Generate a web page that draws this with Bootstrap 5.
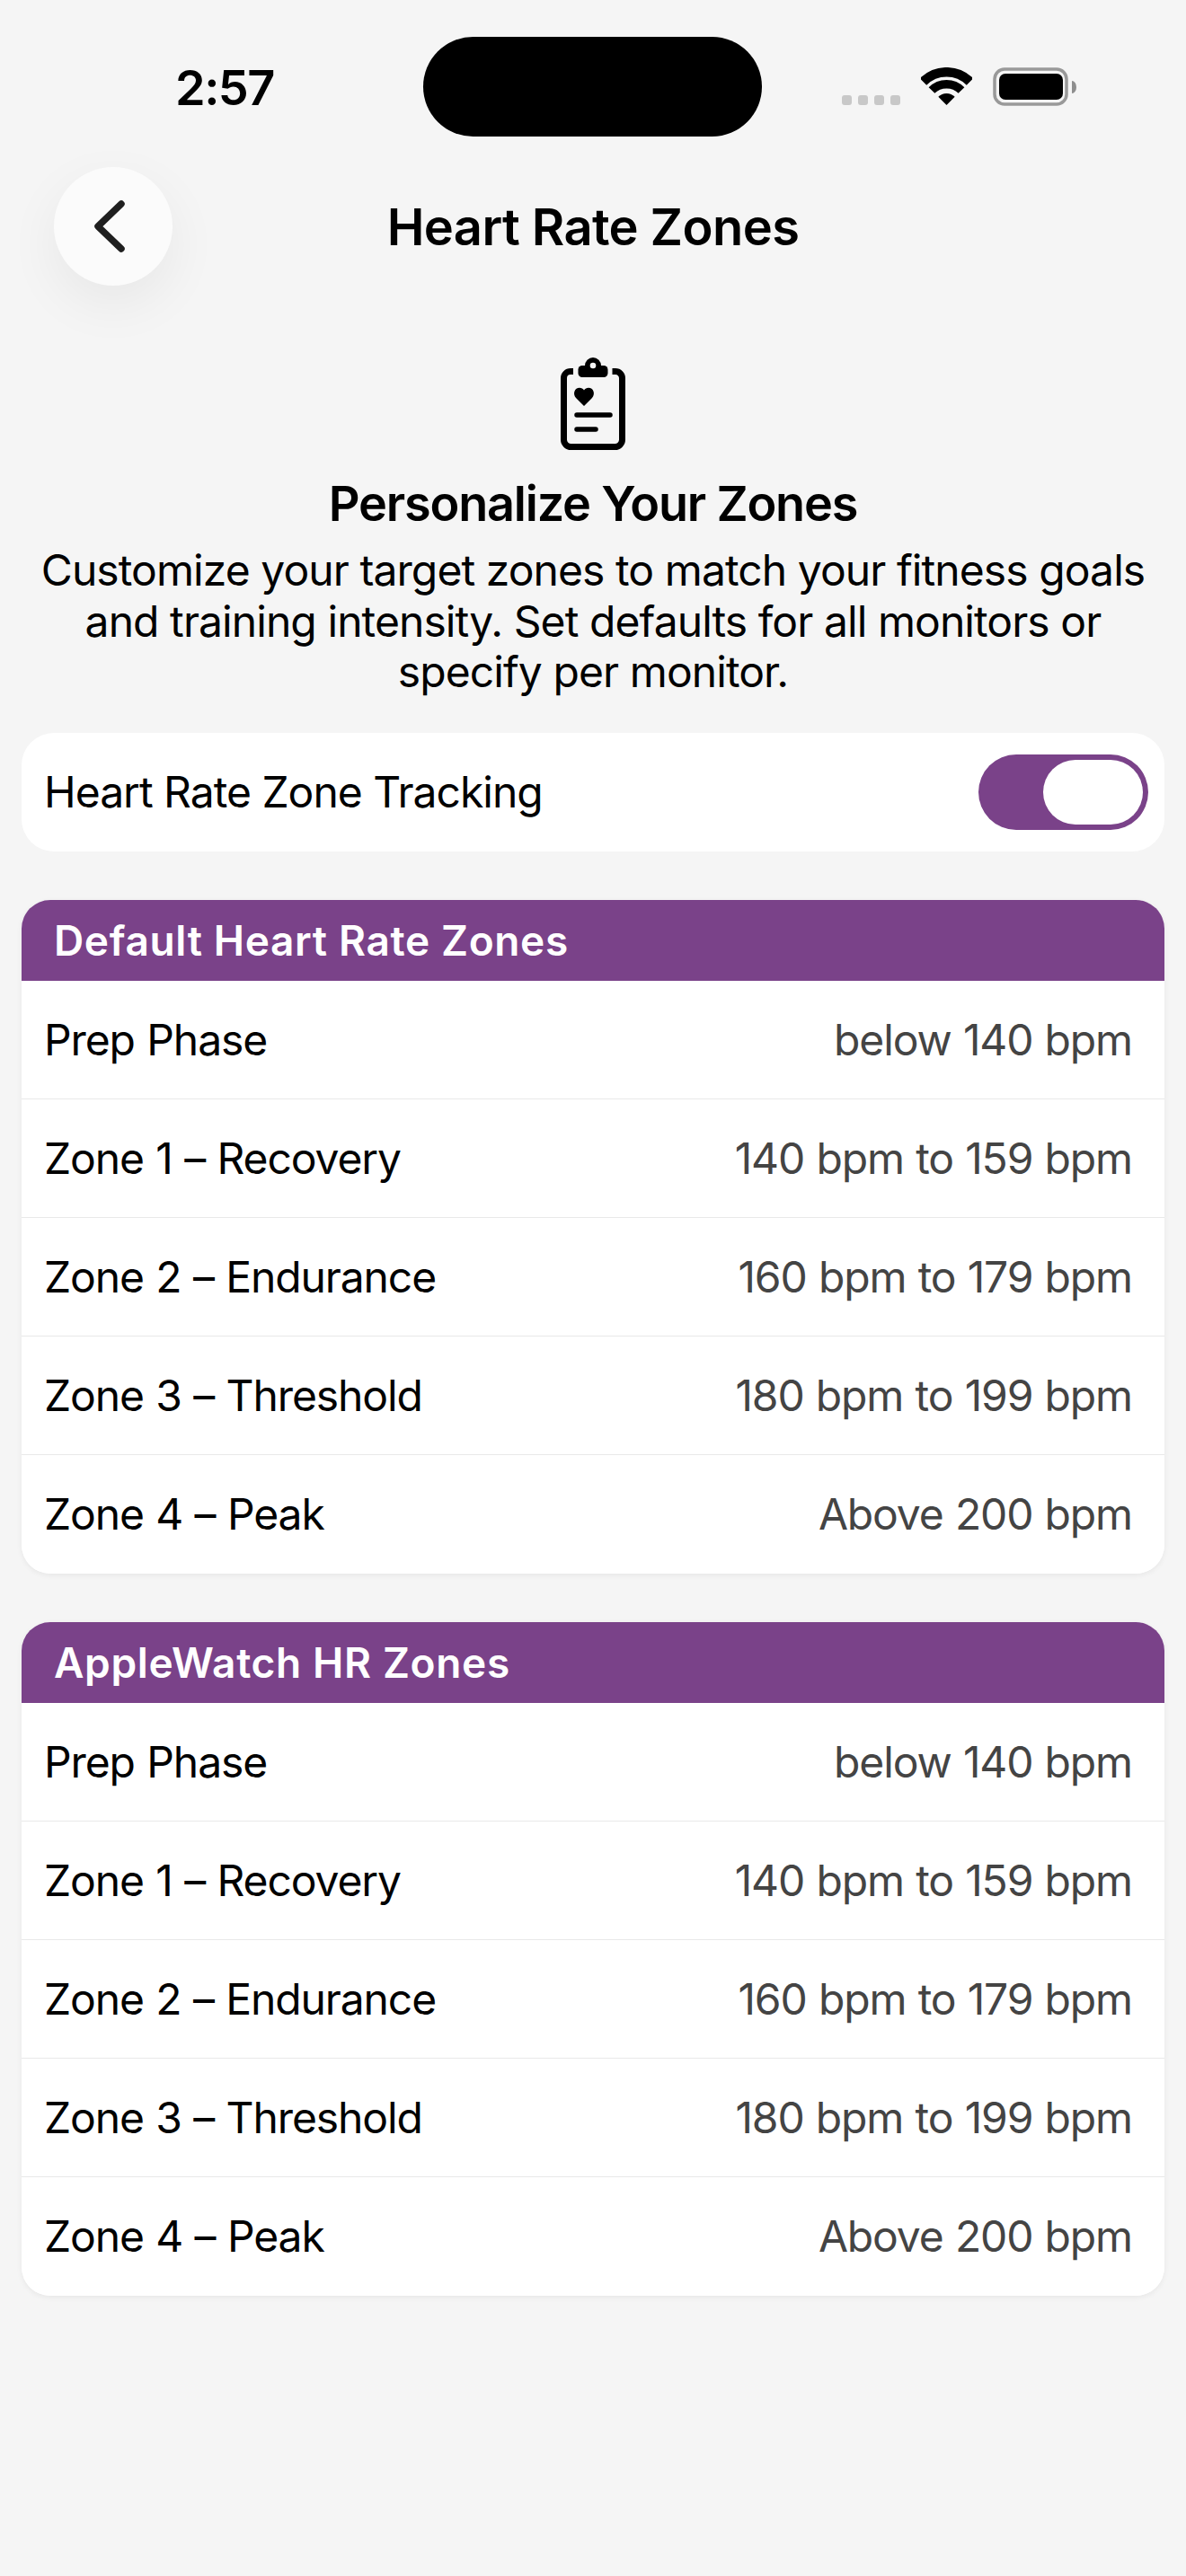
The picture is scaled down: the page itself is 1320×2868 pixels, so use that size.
<!DOCTYPE html>
<html lang="en">
<head>
<meta charset="utf-8">
<title>Heart Rate Zones</title>
<link href="https://cdn.jsdelivr.net/npm/bootstrap@5.3.0/dist/css/bootstrap.min.css" rel="stylesheet">
<style>
html,body{background:#f5f5f5;margin:0}
body{width:1320px;height:2868px;overflow:hidden;font-family:Inter,"Liberation Sans",sans-serif;color:#000}
.statusbar{height:186px;padding:41px 0 0 195px;align-items:flex-start}
.clock{font-weight:600;font-size:54px;width:110px;margin-top:36px;line-height:42px;letter-spacing:-1.5px;white-space:nowrap}
.island{width:377px;height:111px;border-radius:56px;background:#000;margin-left:166px}
.sig{display:flex;gap:7px;margin:65px 0 0 89px}
.sig i{display:block;width:11px;height:11px;border-radius:3px;background:#c8c8c8}
.wifi{margin:34px 0 0 23px;display:block}
.batt{margin:34px 0 0 23px;display:block}
.navrow{padding:0 60px;align-items:center;height:132px}
.side{width:132px;height:132px;flex:none}
.backbtn{border-radius:50%;background:#fbfbfb;box-shadow:0 20px 60px rgba(0,0,0,.06);border:0;padding:0;display:flex;align-items:center;justify-content:center}
.backbtn svg{margin-right:8px}
.ttl{font-weight:600;font-size:56px;line-height:1;letter-spacing:-.6px;margin:0;padding-top:2px}
.hero{margin-top:80px;text-align:center}
.hero svg{display:block;margin:0 auto}
.hero h2{font-weight:600;font-size:54px;line-height:60px;letter-spacing:-1.2px;margin:30px 0 0}
.hero p{font-size:48px;line-height:56.7px;letter-spacing:-.92px;margin:16px 0 0;padding:0 40px}
.wrap{padding:0 24px}
.trackrow{height:132px;border-radius:36px;background:#fff;margin-top:39px;padding:0 18px 0 25px;align-items:center;justify-content:space-between;font-size:48px;letter-spacing:-1px}
.tgl{width:189px;height:84px;border-radius:42px;background:#7a4289;padding:6px;display:flex;justify-content:flex-end}
.tgl span{display:block;width:111px;height:72px;border-radius:36px;background:#fff}
.zcard{border:0;border-radius:32px;overflow:hidden;background:#fff;box-shadow:0 2px 6px rgba(0,0,0,.06);margin-top:54px;--bs-card-border-width:0}
.zhead{background:#7a4289;color:#fff;height:90px;font-size:46px;font-weight:600;line-height:90px;letter-spacing:.65px;padding:0 0 0 36px;border:0;border-radius:0}
.zrow{height:132px;padding:0 36px 0 25px;display:flex;justify-content:space-between;align-items:center;font-size:48px;letter-spacing:-1.1px;word-spacing:1px;color:#000;border:0;border-bottom:3px solid #e9e9e9;border-radius:0;background:#fff}
.zrow:last-child{border-bottom:0}
.zval{color:#444;letter-spacing:-1.15px}
</style>
</head>
<body>
<div class="d-flex statusbar">
  <div class="clock">2:57</div>
  <div class="island"></div>
  <div class="sig"><i></i><i></i><i></i><i></i></div>
  <svg class="wifi" width="57" height="42" viewBox="0 0 57 42" fill="none"><path d="M2.5 16A36.75 36.75 0 0 1 54.5 16" stroke="#000" stroke-width="10.5"/><path d="M12 25.5A23.25 23.25 0 0 1 45 25.5" stroke="#000" stroke-width="9.5"/><path d="M28.5 42L19.3 32.8A13 13 0 0 1 37.7 32.8Z" fill="#000"/></svg>
  <svg class="batt" width="93" height="43" viewBox="0 0 93 43"><rect x="2" y="2" width="80" height="39" rx="11" fill="none" stroke="#999" stroke-width="3.5"/><rect x="7" y="7" width="71" height="29" rx="7" fill="#000"/><path d="M88 15a5 7 0 0 1 5 7a5 7 0 0 1-5 7Z" fill="#8e8e8e"/></svg>
</div>
<div class="d-flex navrow">
  <button class="side backbtn" type="button" aria-label="Back"><svg width="36" height="60" viewBox="0 0 36 60" fill="none"><path d="M31 5L5 30L31 55" stroke="#1f1f1f" stroke-width="7.5" stroke-linecap="round" stroke-linejoin="round"/></svg></button>
  <h1 class="ttl flex-grow-1 text-center">Heart Rate Zones</h1>
  <div class="side"></div>
</div>
<div class="hero">
  <svg width="72" height="103" viewBox="0 0 72 103" fill="none">
    <path d="M14 15.500H11A7.500 7.500 0 0 0 3.500 23V91.500A8 8 0 0 0 11.500 99.500H60.500A8 8 0 0 0 68.500 91.500V23A7.500 7.500 0 0 0 61 15.500H57.500" stroke="#000" stroke-width="7"/>
    <circle cx="36" cy="9" r="9" fill="#000"/>
    <rect x="19.500" y="9" width="33" height="13" rx="4.500" fill="#000"/>
    <circle cx="36" cy="9" r="3.300" fill="#f5f5f5"/>
    <path d="M26 54L17 45C13 40.500 15.500 33.800 21 33.800C23 33.800 25 34.700 26 36.500C27 34.700 29 33.800 31 33.800C36.500 33.800 39 40.500 35 45Z" fill="#000"/>
    <path d="M18 64H55M18 80H39" stroke="#000" stroke-width="5.500" stroke-linecap="round"/>
  </svg>
  <h2>Personalize Your Zones</h2>
  <p>Customize your target zones to match your fitness goals and training intensity. Set defaults for all monitors or specify per monitor.</p>
</div>
<div class="wrap">
  <div class="d-flex trackrow"><span>Heart Rate Zone Tracking</span><div class="tgl"><span></span></div></div>
  <div class="card zcard">
    <div class="card-header zhead">Default Heart Rate Zones</div>
    <ul class="list-group list-group-flush">
      <li class="list-group-item zrow"><span>Prep Phase</span><span class="zval">below 140 bpm</span></li>
      <li class="list-group-item zrow"><span>Zone 1 – Recovery</span><span class="zval">140 bpm to 159 bpm</span></li>
      <li class="list-group-item zrow"><span>Zone 2 – Endurance</span><span class="zval">160 bpm to 179 bpm</span></li>
      <li class="list-group-item zrow"><span>Zone 3 – Threshold</span><span class="zval">180 bpm to 199 bpm</span></li>
      <li class="list-group-item zrow"><span>Zone 4 – Peak</span><span class="zval">Above 200 bpm</span></li>
    </ul>
  </div>
  <div class="card zcard">
    <div class="card-header zhead">AppleWatch HR Zones</div>
    <ul class="list-group list-group-flush">
      <li class="list-group-item zrow"><span>Prep Phase</span><span class="zval">below 140 bpm</span></li>
      <li class="list-group-item zrow"><span>Zone 1 – Recovery</span><span class="zval">140 bpm to 159 bpm</span></li>
      <li class="list-group-item zrow"><span>Zone 2 – Endurance</span><span class="zval">160 bpm to 179 bpm</span></li>
      <li class="list-group-item zrow"><span>Zone 3 – Threshold</span><span class="zval">180 bpm to 199 bpm</span></li>
      <li class="list-group-item zrow"><span>Zone 4 – Peak</span><span class="zval">Above 200 bpm</span></li>
    </ul>
  </div>
</div>
<script src="https://cdn.jsdelivr.net/npm/bootstrap@5.3.0/dist/js/bootstrap.bundle.min.js"></script>
</body>
</html>
